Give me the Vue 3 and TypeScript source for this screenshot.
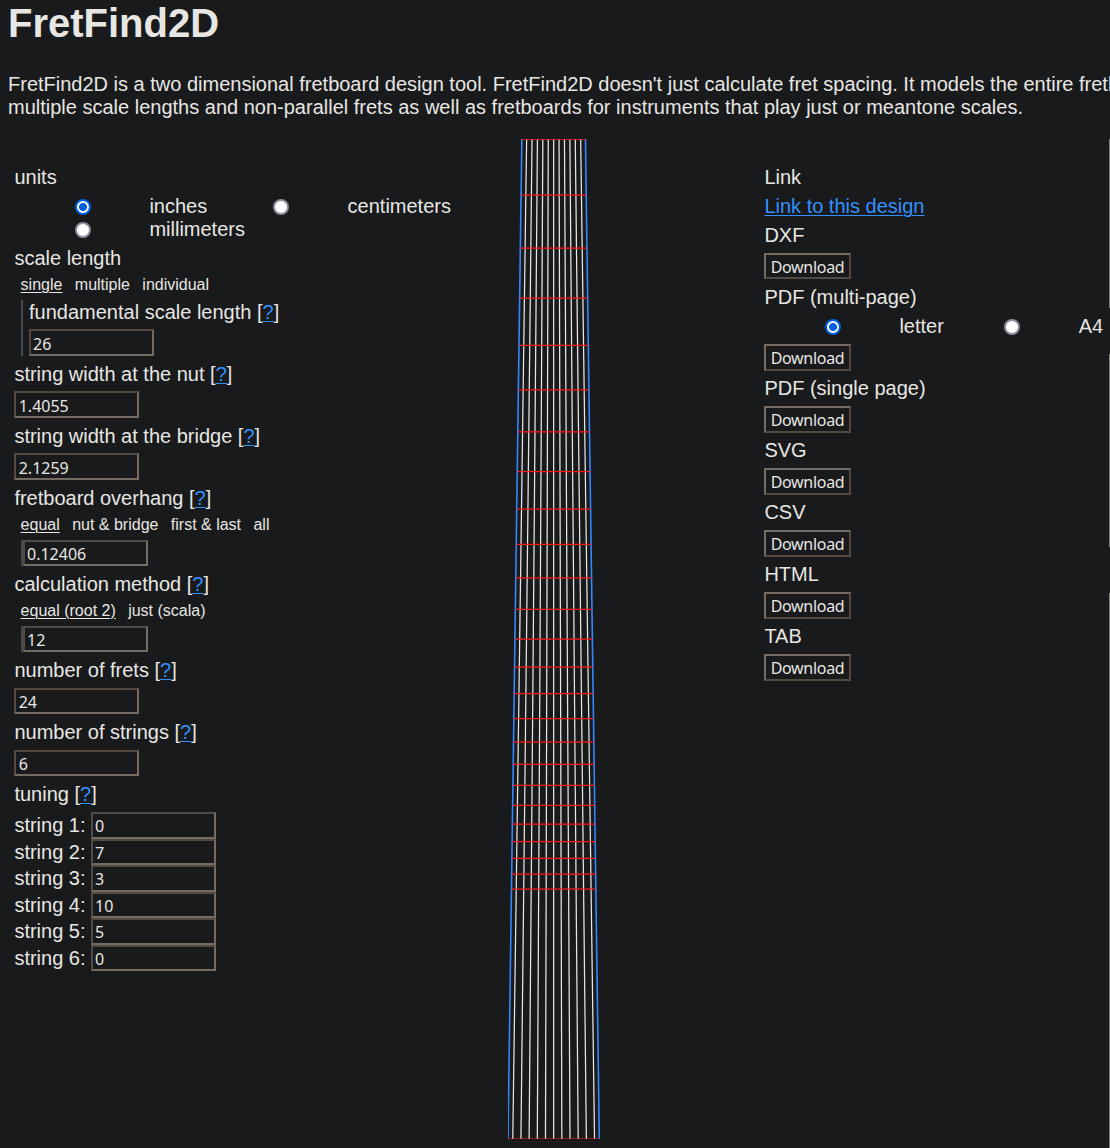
<script setup lang="ts">
import { computed, ref } from 'vue'

interface Exporter {
  label: string
  paper?: boolean
  short?: boolean
}

const units = ref('inches')
const paper = ref('letter')
const scaleLength = ref('26')
const nutWidth = ref('1.4055')
const bridgeWidth = ref('2.1259')
const overhang = ref('0.12406')
const divisions = ref('12')
const fretCount = ref('24')
const stringCount = ref('6')
const tuning = ref(['0', '7', '3', '10', '5', '0'])

const exporters: Exporter[] = [
  { label: 'DXF', short: true },
  { label: 'PDF (multi-page)', paper: true },
  { label: 'PDF (single page)' },
  { label: 'SVG' },
  { label: 'CSV' },
  { label: 'HTML' },
  { label: 'TAB' },
]

const HEIGHT = 1000

const board = computed(() => {
  const k = HEIGHT / Number(scaleLength.value)
  const nut = (Number(nutWidth.value) / 2) * k
  const bridge = (Number(bridgeWidth.value) / 2) * k
  const over = Number(overhang.value) * k
  const c = bridge + over
  const lines = Number(stringCount.value) * 2 - 1
  const strings = Array.from({ length: lines }, (_, i) => {
    const t = (i / (lines - 1)) * 2 - 1
    return { x1: c + t * nut, x2: c + t * bridge }
  })
  const edges = [-1, 1].map((s) => ({ x1: c + s * (nut + over), x2: c + s * (bridge + over) }))
  const at = (f: number) => {
    const half = nut + over + (bridge - nut) * f
    return { y: f * HEIGHT, x1: c - half, x2: c + half }
  }
  const frets = Array.from({ length: Number(fretCount.value) + 1 }, (_, n) =>
    at(1 - Math.pow(2, -n / Number(divisions.value))),
  )
  frets.push(at(1))
  return { strings, edges, frets }
})
</script>

<template>
  <main class="page">
    <h1>FretFind2D</h1>
    <p class="intro">
      FretFind2D is a two dimensional fretboard design tool. FretFind2D doesn't just calculate fret spacing. It models the entire fretboard<br />
      multiple scale lengths and non-parallel frets as well as fretboards for instruments that play just or meantone scales.
    </p>
    <div class="columns">
      <form class="settings" @submit.prevent>
        <div class="label">units</div>
        <div class="radios units">
          <label><input v-model="units" type="radio" value="inches" /><span>inches</span></label>
          <label><input v-model="units" type="radio" value="centimeters" /><span>centimeters</span></label>
          <label><input v-model="units" type="radio" value="millimeters" /><span>millimeters</span></label>
        </div>
        <div class="label">scale length</div>
        <div class="tabs"><span class="on">single</span><span>multiple</span><span>individual</span></div>
        <div class="panel tall">
          <div class="label flush">fundamental scale length [<a href="#">?</a>]</div>
          <input v-model="scaleLength" class="text" />
        </div>
        <div class="label">string width at the nut [<a href="#">?</a>]</div>
        <input v-model="nutWidth" class="text plain" />
        <div class="label">string width at the bridge [<a href="#">?</a>]</div>
        <input v-model="bridgeWidth" class="text plain" />
        <div class="label">fretboard overhang [<a href="#">?</a>]</div>
        <div class="tabs">
          <span class="on">equal</span><span>nut &amp; bridge</span><span>first &amp; last</span><span>all</span>
        </div>
        <div class="panel"><input v-model="overhang" class="text short" /></div>
        <div class="label">calculation method [<a href="#">?</a>]</div>
        <div class="tabs"><span class="on">equal (root 2)</span><span>just (scala)</span></div>
        <div class="panel"><input v-model="divisions" class="text short" /></div>
        <div class="label">number of frets [<a href="#">?</a>]</div>
        <input v-model="fretCount" class="text plain low" />
        <div class="label">number of strings [<a href="#">?</a>]</div>
        <input v-model="stringCount" class="text plain low" />
        <div class="label">tuning [<a href="#">?</a>]</div>
        <div class="tuning">
          <label v-for="(_, i) in tuning" :key="i">
            <span>string {{ i + 1 }}:</span><input v-model="tuning[i]" class="text" />
          </label>
        </div>
      </form>

      <svg class="board" width="92" height="1000" viewBox="0 0 92 1000">
        <line v-for="(s, i) in board.strings" :key="'s' + i" :x1="s.x1" y1="0" :x2="s.x2" y2="1000" stroke="#e8e6e3" stroke-width="1.25" />
        <line v-for="(e, i) in board.edges" :key="'e' + i" :x1="e.x1" y1="0" :x2="e.x2" y2="1000" stroke="#3586ff" stroke-width="1.6" />
        <line v-for="(f, i) in board.frets" :key="'f' + i" :x1="f.x1" :y1="f.y" :x2="f.x2" :y2="f.y" stroke="#ff1a1a" stroke-width="1.25" />
      </svg>

      <section class="output">
        <div class="label">Link</div>
        <div class="label link"><a href="#">Link to this design</a></div>
        <template v-for="e in exporters" :key="e.label">
          <div class="label">{{ e.label }}</div>
          <div v-if="e.paper" class="radios">
            <label><input v-model="paper" type="radio" value="letter" /><span>letter</span></label>
            <label><input v-model="paper" type="radio" value="a4" /><span>A4</span></label>
          </div>
          <button type="button" :class="{ short: e.short }">Download</button>
        </template>
      </section>

      <div class="rail"><i></i><i></i><i></i></div>
    </div>
  </main>
</template>

<style>
html,
body {
  margin: 0;
  background: #181a1b;
}
</style>

<style scoped>
.page {
  box-sizing: border-box;
  width: 1110px;
  height: 1148px;
  overflow: hidden;
  background: #181a1b;
  color: #e8e6e3;
  font: 20px/23px 'Liberation Sans', Arial, sans-serif;
}
h1 {
  margin: 0 0 0 8px;
  font-size: 40px;
  line-height: 46px;
}
.intro {
  margin: 27px 0 0 8px;
  white-space: nowrap;
}
.columns {
  display: grid;
  grid-template-columns: 508px 92px 164px 345px 1px;
  margin-top: 20px;
  height: 1009px;
}
a {
  color: #3391ff;
  text-decoration: underline;
  text-decoration-thickness: 1px;
  text-underline-offset: 2px;
}
.settings {
  padding: 27px 0 0 14px;
}
.output {
  grid-column: 4;
  padding-top: 27px;
}
.label {
  height: 23px;
  padding-left: 0.4px;
  white-space: nowrap;
}
.flush {
  padding-left: 0;
}
.link {
  margin: 6px 0;
}
.radios {
  display: flex;
  flex-wrap: wrap;
  width: 490px;
  margin: 6px 0;
}
.radios label {
  display: flex;
  height: 23px;
}
.units label:first-child {
  margin-right: 66px;
}
.units label:nth-child(2) {
  margin-right: 30px;
}
.output .radios {
  width: auto;
  flex-wrap: nowrap;
  white-space: nowrap;
}
.output .radios label:first-child {
  margin-right: 60px;
}
.radios label input {
  appearance: none;
  box-sizing: border-box;
  flex: none;
  width: 16px;
  height: 16px;
  margin: 4px 58.4px 0 61px;
  border: 2px solid #8f8f9d;
  border-radius: 50%;
  background: #fff;
}
.units label:nth-child(2) input {
  margin-left: 0;
}
.output .radios label + label input {
  margin-left: 0.4px;
}
.radios label input:checked {
  border-color: #0060df;
  background: radial-gradient(circle, #0060df 3.6px, #fff 4.4px);
}
.tabs {
  display: flex;
  gap: 12.4px;
  height: 19px;
  margin: 5px 0 6px 6.6px;
  font-size: 16px;
  line-height: 19px;
  white-space: nowrap;
}
.tabs .on {
  text-decoration: underline;
  text-decoration-thickness: 1px;
  text-underline-offset: 2px;
}
.panel {
  margin: 0 0 7px 7px;
  border-left: 2px solid #43494d;
}
.tall {
  padding: 1px 0 0 6px;
}
.tall .text {
  margin-top: 5px;
}
.text {
  display: block;
  box-sizing: border-box;
  width: 125px;
  height: 27px;
  margin: 0;
  padding: 2px 2px 0;
  border: 2px solid;
  border-color: #544a41 #756b5e #756b5e #544a41;
  border-radius: 0;
  outline: none;
  background: #181a1b;
  color: #e8e6e3;
  font: 16px 'Noto Sans', sans-serif;
}
.plain {
  margin: 5px 0 7px;
  padding-left: 2.7px;
}
.short {
  height: 26px;
}
.low {
  height: 26px;
  margin-top: 6px;
}
.tuning {
  padding-top: 6px;
}
.tuning label {
  display: flex;
  height: 26.5px;
}
.tuning span {
  box-sizing: border-box;
  width: 77px;
  padding: 2px 0 0 0.4px;
}
.tuning .text {
  height: 26.5px;
}
button {
  display: block;
  box-sizing: border-box;
  width: 87px;
  height: 27px;
  margin: 6px 0;
  padding: 1px 0 0;
  border: 2px solid;
  border-color: #756b5e #544a41 #544a41 #756b5e;
  border-radius: 0;
  background: #181a1b;
  color: #e8e6e3;
  font: 16px/20px 'Noto Sans', sans-serif;
  letter-spacing: -0.3px;
}
button.short {
  height: 26px;
  margin-bottom: 7px;
}
.board {
  display: block;
}
.rail {
  grid-column: 5;
  display: flex;
  flex-direction: column;
  gap: 46px;
}
.rail i {
  height: 169px;
  background: #8c8375;
}
.rail i:nth-child(2) {
  height: 193px;
}
.rail i:nth-child(3) {
  flex: 1;
}
</style>
